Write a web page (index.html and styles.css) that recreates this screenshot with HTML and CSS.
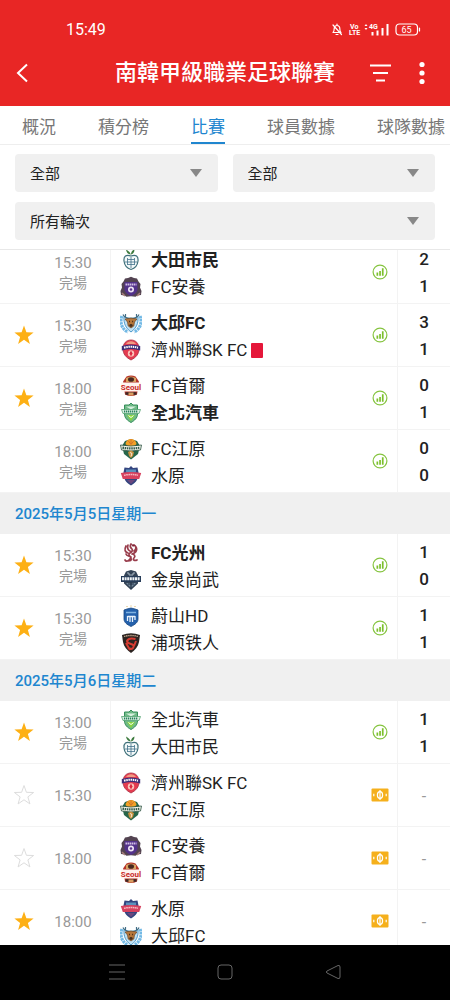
FILE: index.html
```html
<!DOCTYPE html>
<html lang="zh-Hant">
<head>
  <meta charset="UTF-8">
  <meta name="viewport" content="width=device-width, initial-scale=1.0">
  <title>南韓甲級職業足球聯賽</title>
  <link rel="stylesheet" href="styles.css">
</head>
<body>

<!-- icons and club badges -->
<svg class="sprite" aria-hidden="true">
  <symbol id="star" viewBox="0 0 20 20">
    <path d="M10 .5 12.4 7.300 19.600 7.500 13.900 11.900 15.900 18.900 10 14.800 4.100 18.900 6.100 11.900 .4 7.500 7.600 7.300Z"/>
  </symbol>
  <symbol id="stats" viewBox="0 0 16 16">
    <circle cx="8" cy="8" r="6.900" fill="none" stroke="#86c440" stroke-width="1.200"/>
    <path d="M4.500 8.500h1.700v3.200H4.500zM7.200 7h1.700v4.700H7.200zM9.900 4.300h1.700v7.400H9.900z" fill="#7cc02c"/>
  </symbol>
  <symbol id="ticket" viewBox="0 0 18 14">
    <rect x=".5" y=".5" width="17" height="13" rx="1" fill="#f5b01c"/>
    <ellipse cx="9" cy="7" rx="2.600" ry="3.300" fill="none" stroke="#fff" stroke-width="1.200"/>
    <path d="M9 2v10" stroke="#fff" stroke-width="1.200"/>
    <path d="M2.800 5.800v2.400M15.200 5.800v2.400" stroke="#fff" stroke-width="1.200"/>
  </symbol>

  <symbol id="daejeon" viewBox="0 0 22 22">
    <path d="M11 6C10.500 3.500 8 1.500 6 .5c.5 3 2 4.700 4.500 5M11 5.500C11 3 12.500 1 14.500 .5c0 3-1.500 4.500-3.500 5" fill="#3c7a3d"/>
    <path d="M11 7C6 5 3.500 7.500 4 12c.5 4.500 3.500 7.500 7 8.500 3.500-1 6.500-4 7-8.500.5-4.500-2-7-7-5z" fill="#f3f9f9" stroke="#40717b" stroke-width="1.200"/>
    <path d="M11 8v11M5 13h12M7.500 9v7M14.500 9v7M7.500 10.500h7M7.500 15.500h7" fill="none" stroke="#41718a" stroke-width=".8"/>
  </symbol>
  <symbol id="anyang" viewBox="0 0 22 22">
    <path d="M11 .8l3 1.200 3 .5 1.500 3 2 2.500-.5 3.500 1.500 3.500-.5 4-3.500.5-2 1.300-4.500-.5-4.500.5-2-1.300-3.500-.5-.5-4L2 11.500 1.500 8l2-2.500L5 2.500l3-.5z" fill="#534351"/>
    <path d="M4.500 6h13v8c-1 3-3.500 5-6.500 6-3-1-5.500-3-6.500-6z" fill="#53328a"/>
    <path d="M5.500 8.500h11" stroke="#d3bee6" stroke-width="1.800" stroke-dasharray="1.500 .5"/>
    <circle cx="11" cy="13.500" r="3" fill="#eee5f4"/>
    <circle cx="11" cy="13.500" r="1.300" fill="#5b378e"/>
    <path d="M2 17l3 3M20 17l-3 3" stroke="#a87e79" stroke-width="1.500"/>
  </symbol>
  <symbol id="daegu" viewBox="0 0 22 22">
    <path d="M2 4C-.5 10 1.500 17 8 20M20 4c2.500 6 .5 13-6 16" fill="none" stroke="#72b9e5" stroke-width="3.200" stroke-dasharray="2.500 .6"/>
    <path d="M4 5c-.5 6 1.500 11 7 15 5.500-4 7.500-9 7-15" fill="#bfe1f4" stroke="#4d99ca" stroke-width="1"/>
    <path d="M3 2.500c1 3 3 3.500 6 4h4c3-.5 5-1 6-4M5.500 2v3M16.500 2v3" fill="none" stroke="#426e86" stroke-width="1.200"/>
    <path d="M5 7l6-1 6 1-2.500 3-.7 4L11 16l-2.800-2-.7-4z" fill="#b6773b" stroke="#694527" stroke-width=".7"/>
    <path d="M9 9.500h.8M12.300 9.500h.8" stroke="#291d15" stroke-width="1.300"/>
    <ellipse cx="11" cy="13.500" rx="1.700" ry="1.400" fill="#46301f"/>
  </symbol>
  <symbol id="jeju" viewBox="0 0 22 22">
    <path d="M11 1c5 0 8 3.500 8 9 0 5-3 8.500-8 11-5-2.500-8-6-8-11 0-5.500 3-9 8-9z" fill="#e43c50" stroke="#a72e43" stroke-width=".8"/>
    <path d="M6 5c1-2 3-2.800 5-2.800S15 3 16 5z" fill="#f19b82"/>
    <path d="M1.800 7c6-2 12.400-2 18.400 0v4.500c-6-2-12.400-2-18.400 0z" fill="#3c2d77"/>
    <path d="M4 8.700c5-1.300 9-1.300 14 0" fill="none" stroke="#fff" stroke-width="2" stroke-dasharray="1.500 .7"/>
    <circle cx="11" cy="14.500" r="3.200" fill="#f9c6bb"/>
    <path d="M11 11.500l1.500 3-1.500 3-1.500-3z" fill="#da2840"/>
  </symbol>
  <symbol id="seoul" viewBox="0 0 22 22">
    <path d="M6.500 1.500Q11-.5 15.500 1.500L19 6.500l-2 13Q11 22.500 5 19.500L3 6.500z" fill="#b53429"/>
    <path d="M6 3q5-3 10 0v4H6z" fill="#d7a261"/>
    <ellipse cx="11" cy="4.500" rx="3" ry="2.300" fill="#46271f"/>
    <path d="M1 7.500h20v9H1z" fill="#fff4ef"/>
    <text x="11" y="15" class="seoul-text">Seoul</text>
    <path d="M5.500 18.500h11" stroke="#3b2927" stroke-width="2.500"/>
    <path d="M8.500 17.500h5v3h-5z" fill="#d79c60"/>
  </symbol>
  <symbol id="jeonbuk" viewBox="0 0 22 22">
    <path d="M11 1l2 2h4.500v9c0 4-3 6.500-6.500 8.500C7.500 18.500 4.500 16 4.500 12V3H9z" fill="#70ba87" stroke="#368e5b" stroke-width="1"/>
    <path d="M6 4.500h10l-5 3z" fill="#d7efdf"/>
    <path d="M1.500 7.500h19l-1.500 4H3z" fill="#dcefe3" stroke="#55a474" stroke-width=".8"/>
    <path d="M4 9.500h14" stroke="#27835b" stroke-width="2" stroke-dasharray="1.300 .7"/>
    <path d="M7 13h8l-4 6z" fill="#87d53c"/>
    <path d="M8.500 13.500l2.500 2 2.500-2" fill="none" stroke="#fff" stroke-width="1"/>
  </symbol>
  <symbol id="gangwon" viewBox="0 0 22 22">
    <path d="M11 1l6 2 3 5-2 8-7 5.500L4 16 2 8l3-5z" fill="#27664a"/>
    <path d="M5.500 6C6 2.500 8.500 1 11 1s5 1.500 5.500 5l-2 2h-7z" fill="#f2a126"/>
    <path d="M8 2.500l3 4 3-4M11 1v5" fill="none" stroke="#ca692c" stroke-width=".8"/>
    <path d="M.5 7q10.500 2 21 0l-1 5q-9.500 2-19 0z" fill="#f3f4e8" stroke="#295141" stroke-width=".8"/>
    <path d="M2.500 9.700q8.500 1.500 17 0" fill="none" stroke="#31594a" stroke-width="2.200" stroke-dasharray="1.500 .7"/>
    <path d="M8 14l3-1.500 3 1.500-1 4-2 2-2-2z" fill="#c9903f"/>
    <path d="M10 14.500l2 1-1 3" fill="none" stroke="#fff" stroke-width=".8"/>
  </symbol>
  <symbol id="suwon" viewBox="0 0 22 22">
    <path d="M11 1l2 2 4.500-.5 1 5c0 6-2 10-7.500 13-5.500-3-7.500-7-7.500-13l1-5L9 3z" fill="#34457f"/>
    <path d="M6 4.500h10v3H6z" fill="#5b91bd"/>
    <path d="M.8 8q10.200-2 20.400 0l-2 6H2.800z" fill="#d7425f"/>
    <path d="M4 10.200q7-1.300 14 0" fill="none" stroke="#f4b6bf" stroke-width="1.500" stroke-dasharray="1.700 .5"/>
    <path d="M7 15h8l-4 4z" fill="#6c477e"/>
  </symbol>
  <symbol id="gwangju" viewBox="0 0 22 22">
    <path d="M6 4C4 8 5 10 8 11M8 3c-1 3 0 5 2 6M11 2c-2 3 0 4 1 5s0 3-2 4-1 3 1 4M14 3c2 1 3 4 0 6M16 5c2 4-1 6-4 7M6 12c1 3 4 1 5 4s-1 3-3 3M12 12c2 0 4 2 2 4s1 3 3 2M10 17c-1 2-4 3-5 1" fill="none" stroke="#983c4b" stroke-width="1.700" stroke-linecap="round"/>
    <path d="M11 2l4 1-2 2z" fill="#7e2134"/>
  </symbol>
  <symbol id="gimcheon" viewBox="0 0 22 22">
    <path d="M6 2.500L11 1l5 1.500 2 4v8L11 21l-7-6.500v-8z" fill="#334356"/>
    <path d="M7 4h2v2h4V4h2" fill="none" stroke="#a9b7c3" stroke-width="1"/>
    <path d="M1 7h20v6H1z" fill="#283d59"/>
    <path d="M2 9.800h18" stroke="#edf2f5" stroke-width="3" stroke-dasharray="2 .6"/>
    <path d="M6 14h10l-5 5z" fill="#73889a"/>
    <path d="M11 13.500v6M8 15h6" stroke="#202e42" stroke-width="1.200"/>
  </symbol>
  <symbol id="ulsan" viewBox="0 0 22 22">
    <path d="M7 1v1M11 .5v1M15 1v1" stroke="#dcb65f" stroke-width="1"/>
    <path d="M4 5l3-1 4-1 4 1 3 1v9c0 3.500-3 5.500-7 7.500-4-2-7-4-7-7.500z" fill="#2461ac" stroke="#184781" stroke-width=".8"/>
    <path d="M6 7.500h10" stroke="#7fb2e1" stroke-width="1.500"/>
    <path d="M7.500 11v5M10 11v6M12.500 11v6M15 11v4M7.500 11.500h7.500" fill="none" stroke="#e8f2fb" stroke-width="1.300"/>
  </symbol>
  <symbol id="pohang" viewBox="0 0 22 22">
    <path d="M2 3q9-3.500 18 0l-1 7c-1 5-4 8-8 11-4-3-7-6-8-11z" fill="#2c2421"/>
    <path d="M4 4.500q7-2 14 0" fill="none" stroke="#bda48a" stroke-width="1.300" stroke-dasharray="1.500 .6"/>
    <path d="M15.500 7q-7-1.500-8.500 2 0 2 4 3t2 4q-2 2-5-.5M6 11l4 7M16 9l-2 5" fill="none" stroke="#d73c32" stroke-width="2"/>
  </symbol>
</svg>

<header class="app-header">
  <div class="status-bar">
    <span class="clock">15:49</span>
    <svg class="status-icons" viewBox="0 0 92 18" aria-hidden="true">
      <g fill="none" stroke="#fff" stroke-width="1.200" stroke-linecap="round" stroke-linejoin="round">
        <path d="M3 12.500c1-.8 1.200-2 1.200-4A2.800 2.800 0 0 1 7 5.500a2.800 2.800 0 0 1 2.800 3c0 2 .2 3.200 1.200 4zM6 14.500h2M7 4v1.500M3 5l8.500 9.500"/>
        <rect x="66" y="4" width="21.500" height="11" rx="3.500"/>
        <path d="M89.500 8v3"/>
      </g>
      <text x="20" y="8.500" class="tiny">Vo</text>
      <text x="19" y="15" class="tiny">LTE</text>
      <text x="39" y="9" class="tiny">4G</text>
      <path d="M34.500 6l1.500-2 1.500 2zM34.500 8l1.500 2 1.500-2z" fill="#fff"/>
      <path d="M42.500 12v3.500M47.500 10.500v5M52.500 8v7.500M57.500 4v11.500" stroke="#fff" stroke-width="2"/>
      <text x="76.500" y="12.500" class="battery">65</text>
    </svg>
  </div>
  <div class="title-bar">
    <button class="icon-btn back" aria-label="返回">
      <svg width="24" height="24" viewBox="0 0 24 24"><path d="M17 3.500 8 12l9 8.500" fill="none" stroke="#fff" stroke-width="2"/></svg>
    </button>
    <h1>南韓甲級職業足球聯賽</h1>
    <div class="actions">
      <button class="icon-btn" aria-label="篩選">
        <svg width="24" height="24" viewBox="0 0 24 24"><path d="M2 4.500h21M5 12h15M8 19.500h9" fill="none" stroke="#fff" stroke-width="2"/></svg>
      </button>
      <button class="icon-btn" aria-label="更多">
        <svg width="24" height="24" viewBox="0 0 24 24" fill="#fff"><circle cx="12" cy="3.500" r="2.600"/><circle cx="12" cy="12" r="2.600"/><circle cx="12" cy="20.500" r="2.600"/></svg>
      </button>
    </div>
  </div>
</header>

<nav class="tabs">
  <a href="#overview">概況</a>
  <a href="#standings">積分榜</a>
  <a href="#matches" class="active">比賽</a>
  <a href="#players">球員數據</a>
  <a href="#teams">球隊數據</a>
</nav>

<form class="filters">
  <select aria-label="球隊"><option>全部</option></select>
  <select aria-label="狀態"><option>全部</option></select>
  <select class="wide" aria-label="輪次"><option>所有輪次</option></select>
</form>

<main class="matches" id="matches">
  <ul>
    <li class="match">
      <span class="fav"></span>
      <div class="time">15:30<span>完場</span></div>
      <div class="teams">
        <div class="team win"><svg><use href="#daejeon"/></svg>大田市民</div>
        <div class="team"><svg><use href="#anyang"/></svg>FC安養</div>
      </div>
      <svg class="stats"><use href="#stats"/></svg>
      <div class="score"><b>2</b><b>1</b></div>
    </li>
    <li class="match">
      <button class="fav on" aria-label="收藏"><svg><use href="#star"/></svg></button>
      <div class="time">15:30<span>完場</span></div>
      <div class="teams">
        <div class="team win"><svg><use href="#daegu"/></svg>大邱FC</div>
        <div class="team"><svg><use href="#jeju"/></svg>濟州聯SK FC<i class="red-card"></i></div>
      </div>
      <svg class="stats"><use href="#stats"/></svg>
      <div class="score"><b>3</b><b>1</b></div>
    </li>
    <li class="match">
      <button class="fav on" aria-label="收藏"><svg><use href="#star"/></svg></button>
      <div class="time">18:00<span>完場</span></div>
      <div class="teams">
        <div class="team"><svg><use href="#seoul"/></svg>FC首爾</div>
        <div class="team win"><svg><use href="#jeonbuk"/></svg>全北汽車</div>
      </div>
      <svg class="stats"><use href="#stats"/></svg>
      <div class="score"><b>0</b><b>1</b></div>
    </li>
    <li class="match">
      <span class="fav"></span>
      <div class="time">18:00<span>完場</span></div>
      <div class="teams">
        <div class="team"><svg><use href="#gangwon"/></svg>FC江原</div>
        <div class="team"><svg><use href="#suwon"/></svg>水原</div>
      </div>
      <svg class="stats"><use href="#stats"/></svg>
      <div class="score"><b>0</b><b>0</b></div>
    </li>
  </ul>

  <h2>2025年5月5日星期一</h2>
  <ul>
    <li class="match">
      <button class="fav on" aria-label="收藏"><svg><use href="#star"/></svg></button>
      <div class="time">15:30<span>完場</span></div>
      <div class="teams">
        <div class="team win"><svg><use href="#gwangju"/></svg>FC光州</div>
        <div class="team"><svg><use href="#gimcheon"/></svg>金泉尚武</div>
      </div>
      <svg class="stats"><use href="#stats"/></svg>
      <div class="score"><b>1</b><b>0</b></div>
    </li>
    <li class="match">
      <button class="fav on" aria-label="收藏"><svg><use href="#star"/></svg></button>
      <div class="time">15:30<span>完場</span></div>
      <div class="teams">
        <div class="team"><svg><use href="#ulsan"/></svg>蔚山HD</div>
        <div class="team" lang="zh-Hans"><svg><use href="#pohang"/></svg>浦项铁人</div>
      </div>
      <svg class="stats"><use href="#stats"/></svg>
      <div class="score"><b>1</b><b>1</b></div>
    </li>
  </ul>

  <h2>2025年5月6日星期二</h2>
  <ul>
    <li class="match">
      <button class="fav on" aria-label="收藏"><svg><use href="#star"/></svg></button>
      <div class="time">13:00<span>完場</span></div>
      <div class="teams">
        <div class="team"><svg><use href="#jeonbuk"/></svg>全北汽車</div>
        <div class="team"><svg><use href="#daejeon"/></svg>大田市民</div>
      </div>
      <svg class="stats"><use href="#stats"/></svg>
      <div class="score"><b>1</b><b>1</b></div>
    </li>
    <li class="match">
      <button class="fav" aria-label="收藏"><svg><use href="#star"/></svg></button>
      <div class="time">15:30</div>
      <div class="teams">
        <div class="team"><svg><use href="#jeju"/></svg>濟州聯SK FC</div>
        <div class="team"><svg><use href="#gangwon"/></svg>FC江原</div>
      </div>
      <svg class="ticket"><use href="#ticket"/></svg>
      <div class="score none">-</div>
    </li>
    <li class="match">
      <button class="fav" aria-label="收藏"><svg><use href="#star"/></svg></button>
      <div class="time">18:00</div>
      <div class="teams">
        <div class="team"><svg><use href="#anyang"/></svg>FC安養</div>
        <div class="team"><svg><use href="#seoul"/></svg>FC首爾</div>
      </div>
      <svg class="ticket"><use href="#ticket"/></svg>
      <div class="score none">-</div>
    </li>
    <li class="match">
      <button class="fav on" aria-label="收藏"><svg><use href="#star"/></svg></button>
      <div class="time">18:00</div>
      <div class="teams">
        <div class="team"><svg><use href="#suwon"/></svg>水原</div>
        <div class="team"><svg><use href="#daegu"/></svg>大邱FC</div>
      </div>
      <svg class="ticket"><use href="#ticket"/></svg>
      <div class="score none">-</div>
    </li>
  </ul>
</main>

<footer class="system-nav">
  <button aria-label="選單"><svg width="18" height="18" viewBox="0 0 18 18"><path d="M1 2h16M1 9h16M1 16h16"/></svg></button>
  <button aria-label="主畫面"><svg width="18" height="18" viewBox="0 0 18 18"><rect x="2" y="2" width="14" height="14" rx="3"/></svg></button>
  <button aria-label="上一頁"><svg width="18" height="18" viewBox="0 0 18 18"><path d="M14 2.500 3 8q-1.500 1 0 2l11 5.500q2 .5 2-1.500V4q0-2-2-1.500z"/></svg></button>
</footer>

<script>
  document.getElementById('matches').scrollTop = 9;
</script>

</body>
</html>
```
FILE: styles.css
```css
* {
  box-sizing: border-box;
}
body {
  margin: 0;
  height: 100vh;
  display: flex;
  flex-direction: column;
  background: #fff;
  color: #222;
  font-family: Roboto, "Noto Sans CJK TC", sans-serif;
}
[lang="zh-Hans"] {
  font-family: Roboto, "Noto Sans CJK SC", sans-serif;
}
button {
  padding: 0;
  border: none;
  background: none;
  cursor: pointer;
}
svg {
  display: block;
}
ul {
  margin: 0;
  padding: 0;
  list-style: none;
}
.sprite {
  display: none;
}
.seoul-text {
  font: bold 8px Roboto, sans-serif;
  fill: #c92d2c;
  text-anchor: middle;
}

/* header */
.app-header {
  background: #e82625;
  color: #fff;
  padding: 18px 16px 0 10px;
}
.status-bar {
  display: flex;
  justify-content: space-between;
  align-items: center;
  height: 22px;
  padding: 0 12px 0 56px;
}
.clock {
  font-size: 16px;
}
.status-icons {
  width: 92px;
  height: 18px;
}
.tiny {
  font: bold 7px Roboto, sans-serif;
  fill: #fff;
}
.battery {
  font: 9px Roboto, sans-serif;
  fill: #fff;
  text-anchor: middle;
}
.title-bar {
  display: grid;
  grid-template-columns: 82px 1fr 76px;
  align-items: center;
  height: 66px;
}
.title-bar h1 {
  margin: 0;
  font-size: 22px;
  font-weight: 500;
  line-height: 30px;
  text-align: center;
  white-space: nowrap;
}
.icon-btn {
  width: 24px;
  height: 24px;
}
.actions {
  display: flex;
  justify-content: space-between;
  padding-left: 10px;
}

/* tabs */
.tabs {
  display: flex;
  gap: 42px;
  height: 39px;
  padding: 0 22px;
  border-bottom: 1px solid #eee;
  overflow: hidden;
}
.tabs a {
  flex: none;
  height: 38px;
  color: #777;
  font-size: 17px;
  line-height: 42px;
  text-decoration: none;
}
.tabs .active {
  color: #2086cf;
  border-bottom: 2px solid #2086cf;
}

/* filters */
.filters {
  display: grid;
  grid-template-columns: 1fr 1fr;
  gap: 10px 15px;
  padding: 9px 15px;
  border-bottom: 1px solid #e8e8e8;
}
.filters select {
  appearance: none;
  height: 38px;
  padding: 2px 32px 0 15px;
  border: none;
  border-radius: 4px;
  color: #222;
  font: inherit;
  font-size: 15px;
  background: #f0f0f0 url("data:image/svg+xml,%3Csvg xmlns='http://www.w3.org/2000/svg' width='12' height='8'%3E%3Cpath d='M0 0h12L6 8z' fill='%23888'/%3E%3C/svg%3E") no-repeat right 16px center;
}
.filters .wide {
  grid-column: 1 / -1;
}

/* match list */
.matches {
  flex: 1;
  min-height: 0;
  overflow-y: auto;
  scrollbar-width: none;
}
.matches h2 {
  margin: 0;
  padding: 1px 15px 0;
  background: #f0f0f0;
  color: #2086cf;
  font-size: 15px;
  font-weight: 500;
  line-height: 40px;
}
.match {
  display: grid;
  grid-template-columns: 24px 74px 1fr 34px 53px;
  align-items: center;
  height: 63px;
  padding-left: 12px;
  border-bottom: 1px solid #f3f3f3;
}
.fav svg {
  width: 24px;
  height: 20px;
  fill: none;
  stroke: #ddd;
}
.fav.on svg {
  fill: #fdb015;
  stroke: none;
}
.time {
  padding-top: 2px;
  color: #999;
  font-size: 15px;
  line-height: 20px;
  text-align: center;
}
.time span {
  display: block;
  font-size: 14px;
}
.teams {
  align-self: stretch;
  display: flex;
  flex-direction: column;
  justify-content: center;
  padding: 3px 0 0 9px;
  border-left: 1px solid #f3f3f3;
}
.team {
  display: flex;
  align-items: center;
  font-size: 17px;
  line-height: 27px;
  white-space: nowrap;
}
.team svg {
  width: 22px;
  height: 22px;
  margin-right: 9px;
}
.win {
  font-weight: bold;
}
.red-card {
  width: 12px;
  height: 15px;
  margin-left: 4px;
  border-radius: 1px;
  background: #e5173a;
}
.stats {
  width: 16px;
  height: 16px;
  justify-self: center;
}
.ticket {
  width: 18px;
  height: 14px;
  justify-self: center;
}
.score {
  align-self: stretch;
  display: flex;
  flex-direction: column;
  justify-content: center;
  padding-top: 2px;
  border-left: 1px solid #f3f3f3;
  text-align: center;
}
.score b {
  font-size: 17px;
  font-weight: 500;
  line-height: 27px;
}
.score.none {
  color: #999;
}

/* android navigation */
.system-nav {
  display: flex;
  justify-content: center;
  gap: 90px;
  padding: 18px 0 19px;
  background: #000;
}
.system-nav svg {
  fill: none;
  stroke: #666;
}
```
